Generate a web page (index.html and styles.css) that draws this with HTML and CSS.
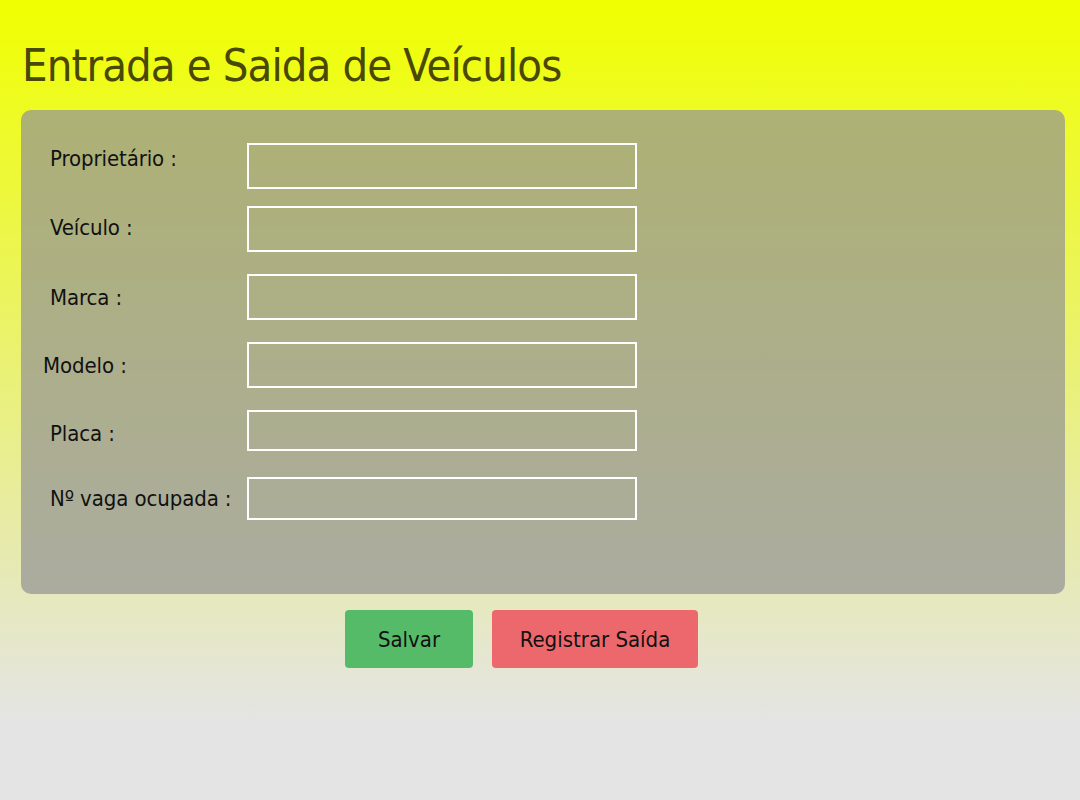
FILE: index.html
```html
<!DOCTYPE html>
<html lang="pt">
<head>
<meta charset="utf-8">
<title>Entrada e Saida de Veículos</title>
<link rel="stylesheet" href="styles.css">
</head>
<body>
<h1 class="title">Entrada e Saida de Veículos</h1>
<form class="card">
  <div class="row r1"><label class="lbl">Proprietário :</label><input class="field" type="text"></div>
  <div class="row r2"><label class="lbl">Veículo :</label><input class="field" type="text"></div>
  <div class="row r3"><label class="lbl">Marca :</label><input class="field" type="text"></div>
  <div class="row r4"><label class="lbl lbl-out">Modelo :</label><input class="field" type="text"></div>
  <div class="row r5"><label class="lbl">Placa :</label><input class="field" type="text"></div>
  <div class="row r6"><label class="lbl">Nº vaga ocupada :</label><input class="field" type="text"></div>
</form>
<div class="actions">
  <button class="btn btn-save" type="button">Salvar</button>
  <button class="btn btn-exit" type="button">Registrar Saída</button>
</div>
</body>
</html>
```
FILE: styles.css
```css
html, body {
  margin: 0;
  padding: 0;
}
body {
  width: 1080px;
  height: 800px;
  background: linear-gradient(to bottom, #f0ff00 0%, #e4e4e4 90%);
  font-family: "DejaVu Sans Condensed", "DejaVu Sans", sans-serif;
  color: #111;
  overflow: hidden;
}
.title {
  margin: 0;
  padding: 38px 0 0 22px;
  height: 110px;
  box-sizing: border-box;
  font-weight: normal;
  font-size: 45px;
  line-height: 56px;
  color: #4a4805;
  letter-spacing: -0.9px;
  white-space: nowrap;
}
.card {
  margin: 0 15px 0 21px;
  height: 484px;
  box-sizing: border-box;
  background: rgba(148, 148, 148, 0.72);
  border-radius: 10px;
  padding-top: 33px;
  display: flex;
  flex-direction: column;
}
.row {
  display: flex;
  align-items: center;
}
.lbl {
  width: 226px;
  padding-left: 29px;
  box-sizing: border-box;
  font-size: 22px;
  letter-spacing: -0.1px;
  white-space: nowrap;
}
.lbl-out { padding-left: 22px; }
.field {
  width: 390px;
  box-sizing: border-box;
  border: 2px solid #fff;
  background: transparent;
  margin: 0;
  padding: 0;
}
.r1 .field { height: 46px; }
.r1 .lbl { margin-top: -16px; }
.r2 { margin-top: 17px; }
.r2 .field { height: 46px; }
.r2 .lbl { margin-top: -4px; }
.r3 { margin-top: 22px; }
.r3 .field { height: 46px; }
.r4 { margin-top: 22px; }
.r4 .field { height: 46px; }
.r5 { margin-top: 22px; }
.r5 .field { height: 41px; }
.r5 .lbl { margin-top: 6px; }
.r6 { margin-top: 26px; }
.r6 .field { height: 43px; }
.r6 .lbl { margin-top: -1px; }
.actions {
  display: flex;
  padding: 16px 0 0 345px;
  gap: 19px;
}
.btn {
  height: 58px;
  border: none;
  border-radius: 4px;
  font-family: inherit;
  font-size: 22px;
  color: #111;
  letter-spacing: 0;
  padding: 0;
}
.btn-save {
  width: 128px;
  background: #55bb69;
}
.btn-exit {
  width: 206px;
  background: #ec686c;
}
```
